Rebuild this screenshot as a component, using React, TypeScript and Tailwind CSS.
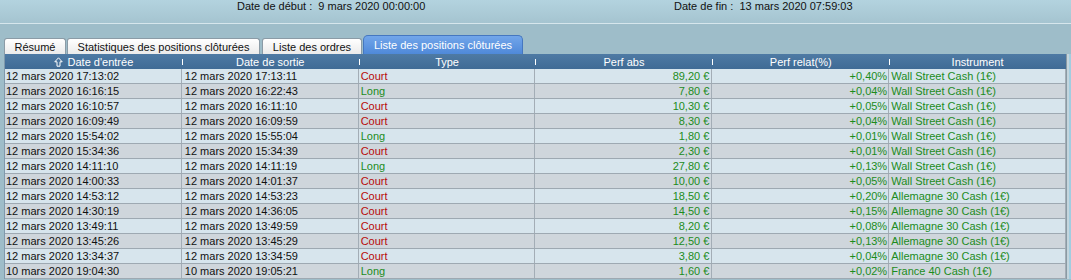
import React from "react";

type Row = {
  entry: string;
  exit: string;
  type: "Court" | "Long";
  abs: string;
  rel: string;
  instrument: string;
};

const WS = "Wall Street Cash (1€)";
const DE = "Allemagne 30 Cash (1€)";

const rows: Row[] = [
  { entry: "12 mars 2020 17:13:02", exit: "12 mars 2020 17:13:11", type: "Court", abs: "89,20 €", rel: "+0,40%", instrument: WS },
  { entry: "12 mars 2020 16:16:15", exit: "12 mars 2020 16:22:43", type: "Long", abs: "7,80 €", rel: "+0,04%", instrument: WS },
  { entry: "12 mars 2020 16:10:57", exit: "12 mars 2020 16:11:10", type: "Court", abs: "10,30 €", rel: "+0,05%", instrument: WS },
  { entry: "12 mars 2020 16:09:49", exit: "12 mars 2020 16:09:59", type: "Court", abs: "8,30 €", rel: "+0,04%", instrument: WS },
  { entry: "12 mars 2020 15:54:02", exit: "12 mars 2020 15:55:04", type: "Long", abs: "1,80 €", rel: "+0,01%", instrument: WS },
  { entry: "12 mars 2020 15:34:36", exit: "12 mars 2020 15:34:39", type: "Court", abs: "2,30 €", rel: "+0,01%", instrument: WS },
  { entry: "12 mars 2020 14:11:10", exit: "12 mars 2020 14:11:19", type: "Long", abs: "27,80 €", rel: "+0,13%", instrument: WS },
  { entry: "12 mars 2020 14:00:33", exit: "12 mars 2020 14:01:37", type: "Court", abs: "10,00 €", rel: "+0,05%", instrument: WS },
  { entry: "12 mars 2020 14:53:12", exit: "12 mars 2020 14:53:23", type: "Court", abs: "18,50 €", rel: "+0,20%", instrument: DE },
  { entry: "12 mars 2020 14:30:19", exit: "12 mars 2020 14:36:05", type: "Court", abs: "14,50 €", rel: "+0,15%", instrument: DE },
  { entry: "12 mars 2020 13:49:11", exit: "12 mars 2020 13:49:59", type: "Court", abs: "8,20 €", rel: "+0,08%", instrument: DE },
  { entry: "12 mars 2020 13:45:26", exit: "12 mars 2020 13:45:29", type: "Court", abs: "12,50 €", rel: "+0,13%", instrument: DE },
  { entry: "12 mars 2020 13:34:37", exit: "12 mars 2020 13:34:59", type: "Court", abs: "3,80 €", rel: "+0,04%", instrument: DE },
  { entry: "10 mars 2020 19:04:30", exit: "10 mars 2020 19:05:21", type: "Long", abs: "1,60 €", rel: "+0,02%", instrument: "France 40 Cash (1€)" },
];

const headers = ["Date d'entrée", "Date de sortie", "Type", "Perf abs", "Perf relat(%)", "Instrument"];

function SortArrow() {
  return (
    <svg width="9" height="10" viewBox="0 0 9 10" className="mr-[5px]">
      <path d="M4.5 0.8 L8.2 4.8 H6 V9.2 H3 V4.8 H0.8 Z" fill="none" stroke="white" strokeWidth="1" />
    </svg>
  );
}

function App() {
  return (
    <div className="w-[1071px] h-[280px] overflow-hidden bg-[#9ebdc9] font-['Liberation_Sans',Arial,sans-serif] text-[11px] text-[#111]">
      {/* Date range bar */}
      <div className="h-[24px] bg-linear-to-b from-[#b3d3df] to-[#a5c4d0] border-b border-[#d6e6ec] flex leading-[12px]">
        <span className="ml-[237px] w-[437px]">Date de début :&nbsp; 9 mars 2020 00:00:00</span>
        <span>Date de fin :&nbsp; 13 mars 2020 07:59:03</span>
      </div>

      {/* Tabs */}
      <div className="h-[30px] flex items-end pl-[4px]">
        <div className="w-[62px] h-[16px] rounded-t-[3px] border border-b-0 border-[#8b9ba6] bg-linear-to-b from-white to-[#ebebeb] flex items-center justify-center leading-[14px]">
          Résumé
        </div>
        <div className="ml-[1px] w-[193px] h-[16px] rounded-t-[3px] border border-b-0 border-[#8b9ba6] bg-linear-to-b from-white to-[#ebebeb] flex items-center justify-center leading-[14px]">
          Statistiques des positions clôturées
        </div>
        <div className="ml-[2px] w-[100px] h-[16px] rounded-t-[3px] border border-b-0 border-[#8b9ba6] bg-linear-to-b from-white to-[#ebebeb] flex items-center justify-center leading-[14px]">
          Liste des ordres
        </div>
        <div className="ml-[1px] w-[160px] h-[19px] rounded-t-[5px] border border-b-0 border-[#4577c0] bg-linear-to-b from-[#72a6ea] to-[#4f89d9] text-white flex items-center justify-center leading-[14px] pb-[1px]">
          Liste des positions clôturées
        </div>
      </div>

      {/* Table */}
      <div className="flex">
        <div className="ml-[4px] w-[1062px] border-l border-[#7f99ac]">
          <div className="grid grid-cols-6 h-[15px] bg-linear-to-b from-[#4e7aa4] to-[#406b95] text-white">
            {headers.map((h, i) => (
              <div key={h} className="relative flex items-center justify-center leading-[14px]">
                {i > 0 && <span className="absolute left-0 top-[5px] w-px h-[6px] bg-white" />}
                {i === 0 && <SortArrow />}
                {h}
              </div>
            ))}
          </div>
          {rows.map((r, i) => (
            <div
              key={i}
              className={`grid grid-cols-6 h-[15px] border-b border-[#9ea9b2] leading-[14px] ${
                i % 2 === 0 ? "bg-[#d7e5ed]" : "bg-[#cfd6dc]"
              }`}
            >
              <div className="border-r border-[#a3adb6] pl-[1px] whitespace-nowrap">{r.entry}</div>
              <div className="border-r border-[#a3adb6] pl-[3px] whitespace-nowrap">{r.exit}</div>
              <div
                className={`border-r border-[#a3adb6] pl-[2px] ${
                  r.type === "Court" ? "text-[#b80a0a]" : "text-[#1c8c1c]"
                }`}
              >
                {r.type}
              </div>
              <div className="border-r border-[#a3adb6] pr-[2px] text-right text-[#1c8c1c]">{r.abs}</div>
              <div className="border-r border-[#a3adb6] pr-[1px] text-right text-[#1c8c1c]">{r.rel}</div>
              <div className="border-r border-[#a3adb6] pl-[2px] text-[#1c8c1c] whitespace-nowrap">{r.instrument}</div>
            </div>
          ))}
        </div>
        {/* Right scroll edge */}
        <div className="flex-1 flex">
          <div className="w-[3px] bg-[#c4d5dd] border-l border-[#8a9aa3]" />
          <div className="flex-1 bg-[#a2cde0]" />
        </div>
      </div>
    </div>
  );
}

export default App;
